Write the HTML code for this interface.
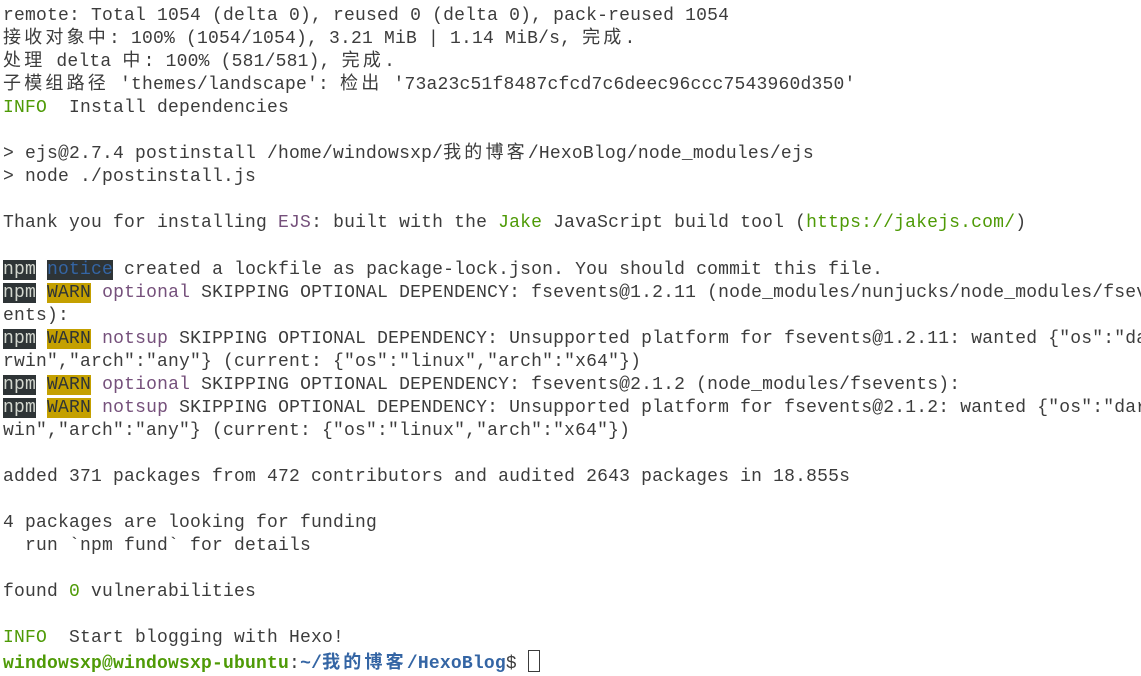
<!DOCTYPE html><html><head><meta charset="utf-8"><style>
body{margin:0;background:#fff;width:1141px;height:666px;overflow:hidden}
pre{margin:0;padding:5px 0 0 3px;font:18px/23.05px "Liberation Mono","Noto Sans CJK SC",monospace;letter-spacing:0.2px;color:#3c3c3c;white-space:pre}
.c{letter-spacing:3.2px}
.g{color:#4e9a06}.p{color:#75507b}
.n{background:#2e3436;color:#d3d7cf}
.nb{background:#2e3436;color:#3465a4}
.w{background:#c4a000;color:#2e3436}
.u{color:#4e9a06;font-weight:bold}.b{color:#3465a4;font-weight:bold}
.cur{display:inline-block;width:10px;height:20px;border:1px solid #3c3c3c;vertical-align:-4px}
</style></head><body><pre>remote: Total 1054 (delta 0), reused 0 (delta 0), pack-reused 1054
<span class="c">接收对象中</span>: 100% (1054/1054), 3.21 MiB | 1.14 MiB/s, <span class="c">完成</span>.
<span class="c">处理</span> delta <span class="c">中</span>: 100% (581/581), <span class="c">完成</span>.
<span class="c">子模组路径</span> 'themes/landscape': <span class="c">检出</span> '73a23c51f8487cfcd7c6deec96ccc7543960d350'
<span class="g">INFO</span>  Install dependencies

&gt; ejs@2.7.4 postinstall /home/windowsxp/<span class="c">我的博客</span>/HexoBlog/node_modules/ejs
&gt; node ./postinstall.js

Thank you for installing <span class="p">EJS</span>: built with the <span class="g">Jake</span> JavaScript build tool (<span class="g">https://jakejs.com/</span>)

<span class="n">npm</span> <span class="nb">notice</span> created a lockfile as package-lock.json. You should commit this file.
<span class="n">npm</span> <span class="w">WARN</span> <span class="p">optional</span> SKIPPING OPTIONAL DEPENDENCY: fsevents@1.2.11 (node_modules/nunjucks/node_modules/fsev
ents):
<span class="n">npm</span> <span class="w">WARN</span> <span class="p">notsup</span> SKIPPING OPTIONAL DEPENDENCY: Unsupported platform for fsevents@1.2.11: wanted {"os":"da
rwin","arch":"any"} (current: {"os":"linux","arch":"x64"})
<span class="n">npm</span> <span class="w">WARN</span> <span class="p">optional</span> SKIPPING OPTIONAL DEPENDENCY: fsevents@2.1.2 (node_modules/fsevents):
<span class="n">npm</span> <span class="w">WARN</span> <span class="p">notsup</span> SKIPPING OPTIONAL DEPENDENCY: Unsupported platform for fsevents@2.1.2: wanted {"os":"dar
win","arch":"any"} (current: {"os":"linux","arch":"x64"})

added 371 packages from 472 contributors and audited 2643 packages in 18.855s

4 packages are looking for funding
  run `npm fund` for details

found <span class="g">0</span> vulnerabilities

<span class="g">INFO</span>  Start blogging with Hexo!
<span class="u">windowsxp@windowsxp-ubuntu</span>:<span class="b">~/<span class="c">我的博客</span>/HexoBlog</span>$ <span class="cur"></span></pre></body></html>
